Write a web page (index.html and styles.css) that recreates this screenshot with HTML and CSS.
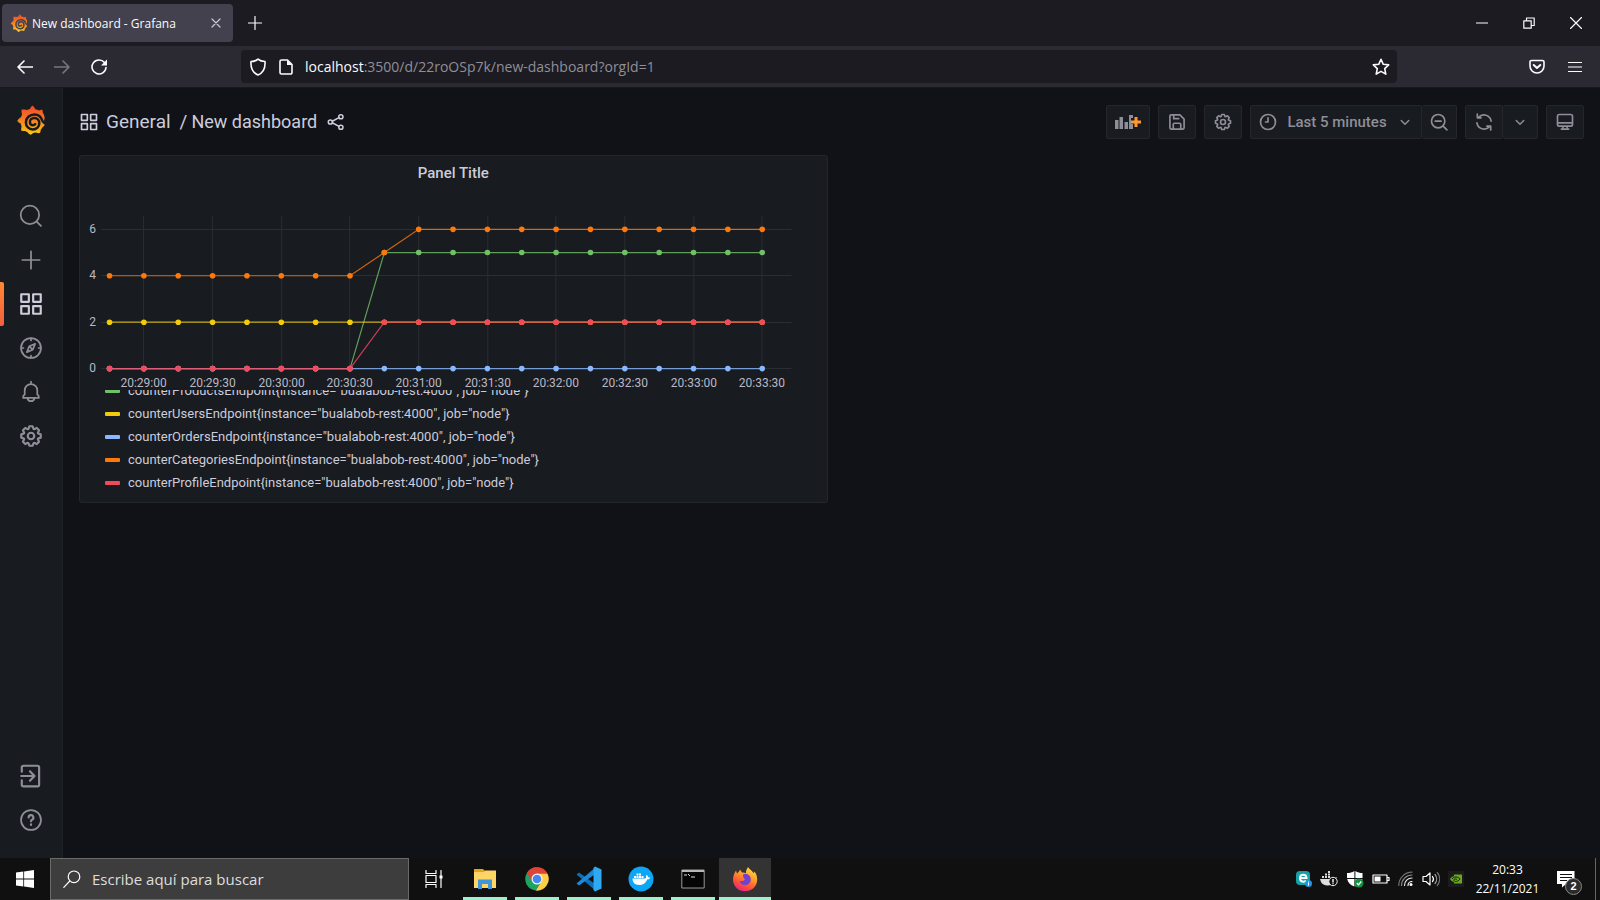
FILE: index.html
```html
<!DOCTYPE html>
<html lang="es">
<head>
<meta charset="utf-8">
<title>New dashboard - Grafana</title>
<link rel="stylesheet" href="styles.css">
</head>
<body>
<svg class="sprite" aria-hidden="true">
  <defs>
    <linearGradient id="flame" x1="0" y1="0" x2="0" y2="1">
      <stop offset="0" stop-color="#f0482b"/><stop offset=".45" stop-color="#f47a22"/><stop offset="1" stop-color="#fcc915"/>
    </linearGradient>
    <linearGradient id="fox" x1=".8" y1="0" x2=".3" y2="1">
      <stop offset="0" stop-color="#ffe14a"/><stop offset=".4" stop-color="#ff9a28"/><stop offset=".75" stop-color="#ff4b3c"/><stop offset="1" stop-color="#e8218b"/>
    </linearGradient>
    <mask id="swirl" maskUnits="userSpaceOnUse" x="0" y="0" width="28" height="30">
      <path fill="#fff" d="M0 0h28v30H0z"/>
      <path fill="none" stroke="#000" stroke-width="2.500" stroke-linecap="round" d="M28 18.500C27 18 26 17 25.300 15.500C24 11.500 21 9.400 17.500 9.400C12.500 9.400 8.900 13 8.900 17.500C8.900 21.500 12 24.400 15.800 24.400C19.600 24.400 22.300 21.600 22.300 18.200C22.300 15.200 20 13 17.300 13C14.700 13 12.900 14.900 12.900 17C12.900 18.900 14.300 20.200 16 20.200C17 20.200 17.800 19.800 18.200 19.100"/>
    </mask>
    <symbol id="grafana" viewBox="0 0 28 30">
      <path mask="url(#swirl)" fill="url(#flame)" d="M27.600 13.200C27.600 11.500 27 9.500 25.800 7.800C26 6.400 25.400 5 25.300 4.800C23.900 4.700 22.800 5.200 22.300 5.500C21 4.900 19.600 4.500 18.200 4.300C17.600 2.200 15.900 .8 15.500 .5C13.800 1.700 13.200 3.400 13 4C11.700 4.200 10.600 4.600 9.600 5.100C7.600 4.300 5.400 4.500 4.600 4.600C4.300 6.700 4.700 8.400 5.100 9.500C4.700 10.300 4.300 11.200 4.100 12C2.100 13 .8 14.900 .3 15.900C1.400 17.400 3 18.200 3.800 18.500C3.900 19.600 4.200 20.600 4.600 21.500C4 23.300 4.200 24.800 4.400 25.700C6.200 26.100 7.400 26.100 8.300 25.900C9 26.500 9.900 27 10.600 27.300C11.400 28.600 12.500 29.400 13.400 29.800C14.700 29.400 15.500 28.700 16.100 27.900C17.100 27.900 18.100 27.700 18.900 27.500C20.300 28.200 22 28.300 22.800 28.100C23.600 26.800 23.800 25.600 23.700 24.700C24.700 23.800 25.300 22.900 25.700 22C27 21.200 27.500 20.200 27.800 19.400L26.500 17.500Z"/>
    </symbol>
    <symbol id="apps" viewBox="0 0 24 24"><path fill="currentColor" d="M10,13H3a1,1,0,0,0-1,1v7a1,1,0,0,0,1,1h7a1,1,0,0,0,1-1V14A1,1,0,0,0,10,13ZM9,20H4V15H9ZM21,2H14a1,1,0,0,0-1,1v7a1,1,0,0,0,1,1h7a1,1,0,0,0,1-1V3A1,1,0,0,0,21,2ZM20,9H15V4h5Zm1,4H14a1,1,0,0,0-1,1v7a1,1,0,0,0,1,1h7a1,1,0,0,0,1-1V14A1,1,0,0,0,21,13Zm-1,7H15V15h5ZM10,2H3A1,1,0,0,0,2,3v7a1,1,0,0,0,1,1h7a1,1,0,0,0,1-1V3A1,1,0,0,0,10,2ZM9,9H4V4H9Z"/></symbol>
    <symbol id="cog" viewBox="0 0 24 24"><path fill="currentColor" d="M21.32,9.55l-1.89-.63.89-1.78A1,1,0,0,0,20.13,6L18,3.87a1,1,0,0,0-1.15-.19l-1.78.89-.63-1.89A1,1,0,0,0,13.5,2h-3a1,1,0,0,0-.95.68L8.92,4.57,7.14,3.68A1,1,0,0,0,6,3.87L3.87,6a1,1,0,0,0-.19,1.15l.89,1.78-1.89.63A1,1,0,0,0,2,10.5v3a1,1,0,0,0,.68.95l1.89.63-.89,1.78A1,1,0,0,0,3.87,18L6,20.13a1,1,0,0,0,1.15.19l1.78-.89.63,1.89a1,1,0,0,0,.95.68h3a1,1,0,0,0,.95-.68l.63-1.89,1.78.89A1,1,0,0,0,18,20.13L20.13,18a1,1,0,0,0,.19-1.15l-.89-1.78,1.89-.63A1,1,0,0,0,22,13.5v-3A1,1,0,0,0,21.32,9.55ZM20,12.78l-1.2.4A2,2,0,0,0,17.64,16l.57,1.14-1.1,1.1L16,17.64a2,2,0,0,0-2.79,1.16l-.4,1.2H11.22l-.4-1.2A2,2,0,0,0,8,17.64l-1.14.57-1.1-1.1L6.36,16A2,2,0,0,0,5.2,13.18L4,12.78V11.22l1.2-.4A2,2,0,0,0,6.36,8L5.79,6.89l1.1-1.1L8,6.36A2,2,0,0,0,10.82,5.2l.4-1.2h1.56l.4,1.2A2,2,0,0,0,16,6.36l1.14-.57,1.1,1.1L17.64,8a2,2,0,0,0,1.16,2.79l1.2.4ZM12,8a4,4,0,1,0,4,4A4,4,0,0,0,12,8Zm0,6a2,2,0,1,1,2-2A2,2,0,0,1,12,14Z"/></symbol>
    <symbol id="down" viewBox="0 0 24 24"><path class="s2" d="M7 10l5 5 5-5"/></symbol>
  </defs>
</svg>

<header class="browser">
  <div class="tabs">
    <div class="tab">
      <svg class="i18"><use href="#grafana"/></svg>
      <span class="tab-title">New dashboard - Grafana</span>
      <button class="plain tab-close" aria-label="Close tab"><svg class="i10" viewBox="0 0 10 10"><path class="s1" d="M1 1l8 8M9 1L1 9"/></svg></button>
    </div>
    <button class="plain new-tab" aria-label="New tab"><svg class="i14" viewBox="0 0 14 14"><path class="s1" d="M7 .5v13M.5 7h13"/></svg></button>
    <div class="window-controls">
      <button class="plain" aria-label="Minimize"><svg class="i12" viewBox="0 0 12 12"><path class="s1" d="M.5 6h11"/></svg></button>
      <button class="plain" aria-label="Restore"><svg class="i12" viewBox="0 0 12 12"><path class="s1" d="M.8 3.800h7.400v7.400H.8zM3.500 3.500V1h7.700v7.500H8.500"/></svg></button>
      <button class="plain" aria-label="Close"><svg class="i12" viewBox="0 0 12 12"><path class="s1" d="M.5.5l11 11M11.500.5l-11 11"/></svg></button>
    </div>
  </div>
  <nav class="navbar" aria-label="Browser">
    <div class="nav-buttons">
      <button class="plain" aria-label="Back"><svg class="i16" viewBox="0 0 16 16"><path class="s15" d="M15.500 8H1M7 2L1 8l6 6"/></svg></button>
      <button class="plain dim" aria-label="Forward" disabled><svg class="i16" viewBox="0 0 16 16"><path class="s15" d="M.5 8H15M9 2l6 6-6 6"/></svg></button>
      <button class="plain" aria-label="Reload"><svg class="i16" viewBox="0 0 16 16"><path class="s15" d="M13.500 3.600A7 7 0 1 0 15 8.500"/><path fill="currentColor" d="M16 .5V6.500H10z"/></svg></button>
    </div>
    <div class="urlbar">
      <svg class="i18" viewBox="0 0 18 18"><path class="s15" d="M9 1.200C7 3 4.500 3.500 2 3.500C1.600 9 3 14.500 9 17C15 14.500 16.400 9 16 3.500C13.500 3.500 11 3 9 1.200z"/></svg>
      <svg class="i16" viewBox="0 0 16 16"><path class="s15" d="M3.500 1h6l4.500 4.500V13.500a1.500 1.500 0 0 1-1.500 1.500h-9A1.500 1.500 0 0 1 2 13.500v-11A1.500 1.500 0 0 1 3.500 1z"/><path fill="currentColor" d="M9 1l5 5H9z"/></svg>
      <div class="url" role="textbox" aria-label="Address"><span class="host">localhost</span>:3500/d/22roOSp7k/new-dashboard?orgId=1</div>
      <button class="plain" aria-label="Bookmark"><svg class="i18" viewBox="0 0 18 18"><path class="s15" d="M9 1.300l2.300 5 5.400.6-4 3.700 1.100 5.500L9 13.400l-4.800 2.700 1.100-5.500-4-3.700 5.400-.6z"/></svg></button>
    </div>
    <div class="nav-end">
      <button class="plain" aria-label="Pocket"><svg class="i16" viewBox="0 0 16 16"><path class="s15" d="M2.500 1.500h11a1.500 1.500 0 0 1 1.500 1.500v4a7 7 0 0 1-14 0V3a1.500 1.500 0 0 1 1.500-1.500z"/><path class="s2" d="M4.700 6L8 9l3.300-3"/></svg></button>
      <button class="plain" aria-label="Menu"><svg class="i14" viewBox="0 0 14 14"><path class="s1" d="M.5 2.500h13M.5 7h13M.5 11.500h13"/></svg></button>
    </div>
  </nav>
</header>

<div class="app">
  <nav class="sidebar" aria-label="Grafana">
    <a class="logo" href="#" aria-label="Home"><svg class="logo-mark"><use href="#grafana"/></svg></a>
    <a class="side" href="#" aria-label="Search"><svg class="i26" viewBox="0 0 24 24"><circle class="s15" cx="11" cy="11" r="8.500"/><path class="s15" d="M17.200 17.200l4 4"/></svg></a>
    <a class="side" href="#" aria-label="Create"><svg class="i26" viewBox="0 0 24 24"><path class="s15" d="M12 4v16M4 12h16"/></svg></a>
    <a class="side active" href="#" aria-label="Dashboards"><svg class="i26"><use href="#apps"/></svg></a>
    <a class="side" href="#" aria-label="Explore"><svg class="i26" viewBox="0 0 24 24"><circle class="s15" cx="12" cy="12" r="9.200"/><path class="s15" d="M12 3v2M12 19v2M3 12h2M19 12h2M15.800 8.200l-2.200 5.400-5.400 2.200 2.200-5.400zM10.600 10.600l2.800 2.800"/></svg></a>
    <a class="side" href="#" aria-label="Alerting"><svg class="i26" viewBox="0 0 24 24"><path class="s15" d="M12 2.500v2M4.800 17.500v-1.200a2 2 0 0 1 1.400-1.900V10.500a5.800 5.800 0 0 1 11.600 0v3.900a2 2 0 0 1 1.400 1.900v1.200zM8.800 18a3.300 3.300 0 0 0 6.400 0"/></svg></a>
    <a class="side" href="#" aria-label="Configuration"><svg class="i26"><use href="#cog"/></svg></a>
    <div class="spacer"></div>
    <a class="side" href="#" aria-label="Sign in"><svg class="i26" viewBox="0 0 24 24"><path class="s2" d="M3.500 8V4A1.500 1.500 0 0 1 5 2.500h13A1.500 1.500 0 0 1 19.500 4v16a1.500 1.500 0 0 1-1.500 1.500H5A1.500 1.500 0 0 1 3.500 20v-4M3 12h11.500M11 7.700l4.200 4.300-4.200 4.300"/></svg></a>
    <a class="side" href="#" aria-label="Help"><svg class="i26" viewBox="0 0 24 24"><circle class="s15" cx="12" cy="12" r="9.200"/><path class="s2" d="M9.800 9.700a2.200 2.200 0 1 1 3.200 2c-.7.400-1 .8-1 1.500M12 16v.6"/></svg></a>
  </nav>

  <main class="main">
    <div class="toolbar">
      <h1 class="crumbs">
        <svg class="i20"><use href="#apps"/></svg>
        <a class="folder" href="#">General</a><span class="slash">/</span><a class="name" href="#">New dashboard</a>
        <button class="plain share" aria-label="Share"><svg class="i18" viewBox="0 0 24 24"><g class="s2"><circle cx="4.500" cy="12" r="2.800"/><circle cx="18.500" cy="5" r="2.800"/><circle cx="18.500" cy="19" r="2.800"/><path d="M7 11l9-4.800M7 13l9 4.800"/></g></svg></button>
      </h1>
      <button class="tool wide" aria-label="Add panel"><svg class="add-icon" viewBox="0 0 26 16"><path fill="currentColor" d="M0 6h3.500v9H0zM4.500 3H8v12H4.500zM9.500 8H13v7H9.500zM14 1h4v3h-2v6h2v5h-4z"/><path fill="#ff9830" d="M19.500 3h3v3.500H26v3h-3.500V13h-3V9.500H16v-3h3.500z"/></svg></button>
      <button class="tool" aria-label="Save dashboard"><svg class="i20" viewBox="0 0 24 24"><path class="s2" d="M5 3.500h10.500l5 5V19a1.500 1.500 0 0 1-1.500 1.500H5A1.500 1.500 0 0 1 3.500 19V5A1.500 1.500 0 0 1 5 3.500zM8 3.500v4.500h6M7.500 20v-5a1.500 1.500 0 0 1 1.500-1.500h6a1.500 1.500 0 0 1 1.500 1.500v5"/></svg></button>
      <button class="tool" aria-label="Dashboard settings"><svg class="i20"><use href="#cog"/></svg></button>
      <div class="group">
        <button class="tool time"><svg class="i20" viewBox="0 0 24 24"><circle class="s2" cx="12" cy="12" r="9"/><path class="s2" d="M12 7v5H9"/></svg><span>Last 5 minutes</span><svg class="i18"><use href="#down"/></svg></button>
        <button class="tool" aria-label="Zoom out"><svg class="i20" viewBox="0 0 24 24"><circle class="s2" cx="11" cy="11" r="8"/><path class="s2" d="M7.500 11h7M17 17l4.500 4.500"/></svg></button>
      </div>
      <div class="group">
        <button class="tool" aria-label="Refresh"><svg class="i20" viewBox="0 0 24 24"><path class="s2" d="M3.500 13A8.600 8.600 0 0 0 18.500 17.500M20.500 11A8.600 8.600 0 0 0 5.500 6.500M4 2.500V7h4.500M20 21.500V17h-4.500"/></svg></button>
        <button class="tool" aria-label="Refresh interval"><svg class="i18"><use href="#down"/></svg></button>
      </div>
      <button class="tool" aria-label="Kiosk mode"><svg class="i20" viewBox="0 0 24 24"><path class="s2" d="M5 3h14a2 2 0 0 1 2 2v10a2 2 0 0 1-2 2H5a2 2 0 0 1-2-2V5a2 2 0 0 1 2-2zM3 13h18M9.500 17v2M14.500 17v2M7.500 20.500h9"/></svg></button>
    </div>

    <div class="grid">
      <section class="panel">
        <h2 class="panel-title">Panel Title</h2>
        <svg class="chart" id="chart" viewBox="0 0 746 199" role="img" aria-label="Endpoint counters over time"></svg>
        <div class="legend">
          <ul>
            <li><i class="key green"></i>counterProductsEndpoint{instance="bualabob-rest:4000", job="node"}</li>
            <li><i class="key yellow"></i>counterUsersEndpoint{instance="bualabob-rest:4000", job="node"}</li>
            <li><i class="key blue"></i>counterOrdersEndpoint{instance="bualabob-rest:4000", job="node"}</li>
            <li><i class="key orange"></i>counterCategoriesEndpoint{instance="bualabob-rest:4000", job="node"}</li>
            <li><i class="key red"></i>counterProfileEndpoint{instance="bualabob-rest:4000", job="node"}</li>
          </ul>
        </div>
      </section>
    </div>
  </main>
</div>

<footer class="taskbar">
  <button class="plain start" aria-label="Inicio"><svg class="i18" viewBox="0 0 18 18"><path fill="#fff" d="M0 2.500L7.300 1.500V8.600H0zM8.100 1.400L18 0v8.600H8.100zM0 9.400h7.300v7.100L0 15.500zM8.100 9.400H18V18l-9.900-1.400z"/></svg></button>
  <label class="search">
    <svg class="i18" viewBox="0 0 18 18"><circle class="s1" cx="11" cy="6.800" r="5.800"/><path class="s1" d="M6.800 11L.8 17.300"/></svg>
    <input type="text" placeholder="Escribe aquí para buscar" aria-label="Escribe aquí para buscar">
  </label>
  <button class="plain taskview" aria-label="Vista de tareas"><svg class="i18" viewBox="0 0 18 18"><path class="s1" d="M1 .5v3h10v-3M1 17.500v-3h10v3M1 5.500h10v7H1zM16 .5v17"/><path fill="#fff" d="M14.500 5.500h3v3h-3z"/></svg></button>
  <button class="plain task" aria-label="Explorador"><svg class="i24" viewBox="0 0 24 24"><path fill="#e8a317" d="M1 2h9l2 2v4H1z"/><path fill="#ffd666" d="M1 5h10l1-1.500h11V21H1z"/><path fill="#3f96d8" d="M5 12.500h14V22h-4v-5H9v5H5z"/></svg></button>
  <button class="plain task" aria-label="Chrome"><svg class="i24" viewBox="0 0 24 24"><path fill="#dc4437" d="M12 12L1.900 6A11.700 11.700 0 0 1 22.300 6.300z"/><path fill="#1ea362" d="M12 12L1.900 6a11.700 11.700 0 0 0 8.800 17.600L16 15z"/><path fill="#ffce44" d="M12 6.600h10.400A11.700 11.700 0 0 1 10.700 23.600L16.700 14z"/><path fill="#dc4437" d="M12 6.600h10.400A11.700 11.700 0 0 0 1.900 6L7 14.500z"/><circle cx="12" cy="12" r="5.500" fill="#f4f4f4"/><circle cx="12" cy="12" r="4.300" fill="#4587f2"/></svg></button>
  <button class="plain task" aria-label="Visual Studio Code"><svg class="i26" viewBox="0 0 26 26"><path fill="#0d6fb8" d="M.5 8.500l2.500-2L20 18.500V25z"/><path fill="#1d88d6" d="M.5 17.500l2.500 2L20 7.500V1z"/><path fill="#30a9f3" d="M19 .5L25.500 3.500v19L19 25.500l-1.500-1.500V2z"/></svg></button>
  <button class="plain task" aria-label="Docker"><svg class="i26" viewBox="0 0 26 26"><circle cx="13" cy="13" r="12.500" fill="#0da5f5"/><path fill="#fff" d="M4.500 12.600h12.700c1.200-.5 1-2 .7-2.800l.8-.9c1 .6 1.300 1.400 1.400 2.300 1-.1 1.700.1 2.200.6-.7 1.400-2 1.700-3.200 1.700-1.500 4-4.100 5.500-8 5.500-4.200 0-6.500-2.200-6.600-6.400zM6 10h2v2H6zM8.500 10h2v2h-2zM11 10h2v2h-2zM13.500 10h2v2h-2zM8.500 7.500h2v2h-2zM11 7.500h2v2h-2z"/></svg></button>
  <button class="plain task" aria-label="Terminal"><svg class="i24" viewBox="0 0 24 24"><path fill="#050505" stroke="#999" d="M.8 3h22.400v18H.8z"/><path fill="#b8b8b8" d="M1 3h22v2H1z"/><path stroke="#ddd" fill="none" d="M3 8h3M7 7l2 2M10 10h4"/></svg></button>
  <button class="plain task current" aria-label="Firefox"><svg class="i26" viewBox="0 0 26 26"><path fill="url(#fox)" d="M16 1c1 2 4 3.500 5.500 6 .7-.2 1-1 .8-1.700C25 8.500 25.500 12 25 15.500 24 21.500 19 25.300 13 25.300 6.500 25.300 1 20.500 1 13.500 1 9 3 6 4 4.500L5 7.500C6.500 6 7.500 5.500 8 3.500l2 3c1.500-.3 3 0 4 1C13.500 5 15 3 16 1z"/><path fill="#7042cf" d="M11 8.500c4-1.300 7.800.8 7.800 5 0 3.500-2.700 5.500-5.800 5.500-2.800 0-5-1.500-5.300-4 1.500.6 4 .3 5.300-1.800-1.500-.8-2-2.200-2-4.700z"/></svg></button>
  <div class="tray">
    <svg class="i16" viewBox="0 0 16 16"><rect width="14" height="14" rx="4" fill="#18a0a8"/><path fill="none" stroke="#fff" stroke-width="2" d="M4 7h6.500C10.500 2.500 4 2.500 4 7c0 4.500 4 4 6 3"/><circle cx="12.500" cy="12.500" r="3.500" fill="#2196e8"/><path stroke="#fff" d="M12.500 10.500v1M12.500 12v2.500"/></svg>
    <svg class="i18" viewBox="0 0 18 18"><path fill="#ddd" d="M0 9h13l4-2-2 5c-2 4-12 5-14 0zM2 6h2v2H2zM5 6h2v2H5zM8 6h2v2H8zM5 3.500h2v2H5zM8 3.500h2v2H8zM8 1h2v2H8z"/><circle cx="13" cy="11.500" r="4.200" fill="#111" stroke="#eee"/><path stroke="#eee" stroke-width="1.500" d="M13 9v3.500M13 13.200v1"/></svg>
    <svg class="i18" viewBox="0 0 18 18"><path fill="#fff" d="M8.400 1v7H1V3c3 0 5-.5 7.400-2zM9.400 1C11.500 2.500 14 3 16.500 3v5H9.400zM1.200 9h7.200v7.500C4 15 2 12.500 1.200 9zM9.400 9h7c-1 4-3 6-7 7.500z"/><circle cx="13" cy="13" r="4.500" fill="#14923f"/><path fill="none" stroke="#fff" stroke-width="1.300" d="M10.800 13l1.700 1.700 2.800-3.200"/></svg>
    <svg class="i18" viewBox="0 0 18 18"><path class="s1" d="M1 5h14v8H1zM15.500 7.500h1.500v3h-1.500"/><path fill="#fff" d="M2.500 6.500h6v5h-6z"/></svg>
    <svg class="i16" viewBox="0 0 16 16"><g class="s1"><path d="M10 14.500a4 4 0 0 1 4-4"/><path opacity=".9" d="M6.500 14.500a7.500 7.500 0 0 1 7.500-7.500"/><path opacity=".5" d="M3.500 14.500A10.500 10.500 0 0 1 14 4"/><path opacity=".4" d="M.8 14.500A13.200 13.200 0 0 1 14 1.200"/></g><circle cx="13" cy="13.500" r="1.500" fill="#fff"/></svg>
    <svg class="i18" viewBox="0 0 18 18"><path class="s1" d="M1 6.500h3L8 3v12l-4-3.500H1zM10.500 6.500a4 4 0 0 1 0 5"/><path class="s1" opacity=".6" d="M13 4.500a7 7 0 0 1 0 9"/><path class="s1" opacity=".4" d="M15.300 2.500a10 10 0 0 1 0 13"/></svg>
    <svg class="i16" viewBox="0 0 16 16"><path fill="#1b1b1b" d="M0 0h16v16H0z"/><path fill="#67a81d" d="M6 3.500h8v9H6V11c-2-.3-3.500-2-4-3 1-1.700 2.500-2.500 4-2.800z"/><path fill="none" stroke="#1b1b1b" d="M4 8c1-1.500 2.500-2 4-2 2 0 3.500 1 4 2-1.500 2-3 2.500-4.500 2.500C6 10.500 5.500 9 6 8.500s2-.8 3 0"/></svg>
  </div>
  <time class="clock"><span>20:33</span><span>22/11/2021</span></time>
  <button class="plain notify" aria-label="Notificaciones">
    <svg class="i18" viewBox="0 0 18 18"><path fill="#fff" d="M0 1h17.500v13H9l-4 3.500V14H0z"/><path stroke="#111" d="M3 4.500h12M3 7.500h12M3 10.500h7"/></svg>
    <span class="badge">2</span>
  </button>
</footer>
<script src="chart.js"></script>
</body>
</html>
```

FILE: styles.css
```css
* { box-sizing: border-box; }
body {
  margin: 0;
  min-height: 100vh;
  display: flex;
  flex-direction: column;
  background: #111217;
  color: #ccccdc;
  font-family: Roboto, "Liberation Sans", sans-serif;
}
h1, h2, ul { margin: 0; padding: 0; font-weight: 400; }
ul { list-style: none; }
a { color: inherit; text-decoration: none; }
svg { display: block; flex: none; }
.sprite { position: absolute; width: 0; height: 0; }
.plain { border: 0; padding: 0; background: none; color: inherit; display: flex; align-items: center; justify-content: center; }

.s1, .s15, .s2 { fill: none; stroke: currentColor; stroke-linecap: round; stroke-linejoin: round; }
.s1 { stroke-width: 1.2; }
.s15 { stroke-width: 1.6; }
.s2 { stroke-width: 2; }
.i10 { width: 10px; height: 10px; }
.i12 { width: 12px; height: 12px; }
.i14 { width: 14px; height: 14px; }
.i16 { width: 16px; height: 16px; }
.i18 { width: 18px; height: 18px; }
.i20 { width: 20px; height: 20px; }
.i24 { width: 24px; height: 24px; }
.i26 { width: 26px; height: 26px; }

/* Browser chrome */
.browser { font-family: "Open Sans", "Noto Sans", sans-serif; color: #fbfbfe; }
.tabs { display: flex; align-items: center; height: 46px; padding: 0 1px 0 2px; background: #1c1b22; }
.tab { display: flex; align-items: center; gap: 4px; width: 231px; height: 38px; padding: 0 12px 0 8px; border-radius: 4px; background: #42414d; }
.tab-title { flex: 1; font-size: 12px; white-space: nowrap; }
.tab-close { color: #c8c8d0; }
.new-tab { width: 43px; height: 38px; }
.window-controls { display: flex; margin-left: auto; }
.window-controls button { width: 47px; height: 30px; }
.navbar { display: flex; align-items: center; height: 42px; background: #2b2a33; border-bottom: 1px solid #18181d; }
.nav-buttons { display: flex; gap: 21px; width: 241px; padding-left: 17px; }
.dim { color: #77767f; }
.urlbar { display: flex; align-items: center; gap: 11px; flex: 1; height: 33px; padding: 0 7px 0 8px; border-radius: 4px; background: #1c1b22; }
.url { flex: 1; font-size: 14px; color: #8f8f99; white-space: nowrap; }
.host { color: #fbfbfe; }
.nav-end { display: flex; justify-content: flex-end; gap: 23px; width: 203px; padding-right: 18px; }

/* Application */
.app { display: flex; flex: 1; }
.sidebar { display: flex; flex-direction: column; width: 63px; padding: 15px 0 16px; background: #181b1f; border-right: 1px solid #202226; color: #8e8e99; }
.logo { display: flex; justify-content: center; height: 91px; }
.logo-mark { width: 28px; height: 34px; }
.side { display: flex; align-items: center; justify-content: center; height: 44px; }
.active { position: relative; color: #ccccdc; }
.active::before { content: ""; position: absolute; left: 0; top: 0; width: 4px; height: 44px; border-radius: 0 2px 2px 0; background: linear-gradient(#ff8833, #f55f3e); }
.spacer { flex: 1; }
.main { flex: 1; min-width: 0; padding: 0 16px; }
.toolbar { display: flex; align-items: center; gap: 8px; height: 67px; }
.crumbs { display: flex; align-items: center; flex: 1; font-size: 19px; white-space: nowrap; }
.folder { margin-left: 7px; }
.name { font-size: 18px; }
.slash { margin: 0 4px 0 9px; }
.share { margin-left: 10px; }
.tool { display: flex; align-items: center; justify-content: center; width: 38px; height: 34px; padding: 0; border: 1px solid #24262b; border-radius: 2px; background: #181b1f; color: #8e8e99; font: 500 15px Roboto, sans-serif; }
.wide { width: 44px; }
.add-icon { width: 26px; height: 16px; }
.group { display: flex; }
.group .tool + .tool { width: 35px; border-left: 0; }
.time { width: 172px; gap: 9px; }

.grid { display: grid; grid-template-columns: 1fr 1fr; gap: 8px; }
.panel { display: flex; flex-direction: column; min-width: 0; border: 1px solid #24262b; border-radius: 3px; background: #181b1f; }
.panel-title { height: 35px; line-height: 35px; text-align: center; font-size: 15px; font-weight: 500; }
.chart { width: 100%; height: auto; }
.chart text { fill: #b9b9c6; font-size: 12px; }
.legend { display: flex; flex-direction: column; justify-content: flex-end; height: 112px; padding-bottom: 8px; overflow: hidden; font-size: 13px; }
.legend li { display: flex; align-items: center; gap: 8px; height: 23px; padding-left: 25px; white-space: nowrap; }
.key { width: 15px; height: 4px; border-radius: 1px; }
.green { background: #73bf69; }
.yellow { background: #f2cc0c; }
.blue { background: #8ab8ff; }
.orange { background: #ff780a; }
.red { background: #f2495c; }

/* Taskbar */
.taskbar { display: flex; height: 42px; background: #101010; color: #fff; font-family: "Open Sans", "Noto Sans", sans-serif; }
.start { width: 50px; }
.search { display: flex; align-items: center; gap: 11px; width: 359px; padding-left: 12px; border: 1px solid #6a6a6a; background: #3d3d3d; }
.search input { flex: 1; min-width: 0; padding: 0; border: 0; outline: 0; background: none; font: 15px "Open Sans", sans-serif; color: #ddd; }
.search input::placeholder { color: #ddd; opacity: 1; }
.taskview { width: 50px; }
.task { width: 52px; position: relative; }
.task::after { content: ""; position: absolute; left: 4px; right: 4px; bottom: 0; height: 3px; background: #9df0cb; }
.current { background: #333; }
.current::after { left: 0; right: 0; }
.tray { display: flex; align-items: center; gap: 8px; margin-left: auto; }
.clock { display: flex; flex-direction: column; justify-content: center; width: 85px; padding-left: 2px; text-align: center; font-size: 12px; line-height: 19px; }
.notify { position: relative; justify-content: flex-start; width: 47px; padding-left: 8px; border-right: 1px solid #666; margin-right: 4px; }
.badge { position: absolute; left: 16px; top: 20px; width: 17px; height: 17px; border: 1px solid #888; border-radius: 50%; background: #2b2b2b; font-size: 11px; font-weight: 600; line-height: 15px; text-align: center; }
```

FILE: chart.js
```js
const chart = document.getElementById("chart");
const NS = "http://www.w3.org/2000/svg";
const x = i => 29.5 + i * 34.33;
const y = v => 177.5 - v * 23.2;

function add(name, attrs, text) {
  const el = document.createElementNS(NS, name);
  for (const key in attrs) el.setAttribute(key, attrs[key]);
  if (text !== undefined) el.textContent = text;
  chart.appendChild(el);
}

["20:29:00", "20:29:30", "20:30:00", "20:30:30", "20:31:00", "20:31:30", "20:32:00", "20:32:30", "20:33:00", "20:33:30"].forEach((label, n) => {
  const px = Math.floor(x(n * 2 + 1)) + 0.5;
  add("path", { d: `M${px} 25V178`, stroke: "#2a2d31" });
  add("text", { x: px, y: 196, "text-anchor": "middle" }, label);
});
[0, 2, 4, 6].forEach(v => {
  const py = Math.floor(y(v)) + 0.5;
  add("path", { d: `M21 ${py}H711`, stroke: "#2a2d31" });
  add("text", { x: 16, y: py + 3, "text-anchor": "end" }, v);
});

const steps = (a, b) => Array.from({ length: 20 }, (_, i) => (i < 8 ? a : b));
const categories = steps(4, 6);
categories[8] = 5;
[
  ["#73bf69", steps(0, 5)],
  ["#f2cc0c", steps(2, 2)],
  ["#8ab8ff", steps(0, 0)],
  ["#ff780a", categories],
  ["#f2495c", steps(0, 2)]
].forEach(([color, values]) => {
  add("polyline", { points: values.map((v, i) => `${x(i)},${y(v)}`).join(" "), fill: "none", stroke: color, "stroke-opacity": 0.8, "stroke-width": 1.2 });
  values.forEach((v, i) => add("circle", { cx: x(i), cy: y(v), r: 2.8, fill: color }));
});
```
